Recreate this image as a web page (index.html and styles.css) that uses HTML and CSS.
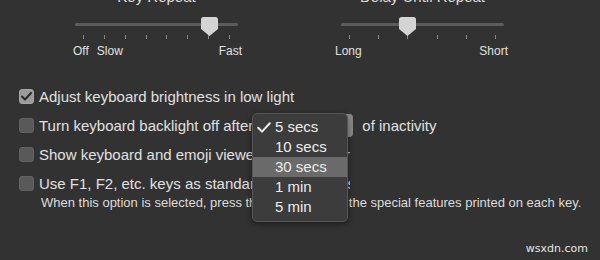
FILE: index.html
```html
<!DOCTYPE html>
<html>
<head>
<meta charset="utf-8">
<link rel="stylesheet" href="styles.css">
</head>
<body>
<div class="page">
  <div class="sliders">
    <div class="slider">
      <div class="slider-title">Key Repeat</div>
      <div class="rail">
        <div class="track"></div>
        <svg class="thumb thumb-kr" width="17" height="19" viewBox="0 0 17 19"><path d="M2.5 0 H14.5 Q17 0 17 2.5 V12 L8.5 19 L0 12 V2.5 Q0 0 2.5 0 Z" fill="#d4d4d4"/></svg>
      </div>
      <div class="ticks"><i></i><i></i><i></i><i></i><i></i><i></i><i></i><i></i></div>
      <div class="labels labels-kr">
        <span class="lbl-group"><span>Off</span><span>Slow</span></span>
        <span>Fast</span>
      </div>
    </div>
    <div class="slider">
      <div class="slider-title">Delay Until Repeat</div>
      <div class="rail">
        <div class="track"></div>
        <svg class="thumb thumb-dr" width="17" height="19" viewBox="0 0 17 19"><path d="M2.5 0 H14.5 Q17 0 17 2.5 V12 L8.5 19 L0 12 V2.5 Q0 0 2.5 0 Z" fill="#d4d4d4"/></svg>
      </div>
      <div class="ticks"><i></i><i></i><i></i><i></i><i></i><i></i></div>
      <div class="labels labels-dr">
        <span>Long</span>
        <span>Short</span>
      </div>
    </div>
  </div>

  <div class="options">
    <div class="row">
      <span class="box checked"><svg width="11" height="9" viewBox="0 0 11 9"><path d="M1 4.5 L4 7.5 L10 1" fill="none" stroke="#2a2a2a" stroke-width="2" stroke-linecap="round" stroke-linejoin="round"/></svg></span>
      <span class="text">Adjust keyboard brightness in low light</span>
    </div>
    <div class="row">
      <span class="box"></span>
      <span class="text">Turn keyboard backlight off after</span>
      <span class="popup-btn"><span class="popup-arrows"></span></span>
      <span class="text">of inactivity</span>
    </div>
    <div class="row">
      <span class="box"></span>
      <span class="text clip">Show keyboard and emoji viewers in menu bar</span>
    </div>
    <div class="row">
      <span class="box"></span>
      <span class="text clip">Use F1, F2, etc. keys as standard function keys</span>
    </div>
    <div class="desc">When this option is selected, press the Fn key to use the special features printed on each key.</div>
  </div>

  <div class="watermark">wsxdn.com</div>

  <div class="menu">
    <div class="item"><svg class="check" width="14" height="11" viewBox="0 0 14 11"><path d="M1.2 5.8 L5 9.6 L12.8 1.2" fill="none" stroke="#ececec" stroke-width="2" stroke-linecap="round" stroke-linejoin="round"/></svg>5 secs</div>
    <div class="item">10 secs</div>
    <div class="item selected">30 secs</div>
    <div class="item">1 min</div>
    <div class="item">5 min</div>
  </div>
</div>
</body>
</html>
```

FILE: styles.css
```css
html, body {
  margin: 0;
  padding: 0;
  background: #323232;
}
body {
  width: 600px;
  height: 260px;
  overflow: hidden;
  font-family: "Liberation Sans", Arial, sans-serif;
  color: #dedede;
}
.page {
  position: relative;
  width: 600px;
  height: 260px;
}
.sliders {
  display: flex;
  gap: 103px;
  padding-left: 75px;
}
.slider {
  width: 163px;
  display: flex;
  flex-direction: column;
}
.slider-title {
  margin-top: -11px;
  height: 16px;
  line-height: 16px;
  font-size: 15px;
  text-align: center;
  color: #dedede;
}
.rail {
  position: relative;
  margin-top: 12px;
  height: 17px;
}
.track {
  margin-top: 6px;
  height: 3px;
  border-radius: 2px;
  background: #5c5c5c;
}
.thumb {
  position: absolute;
  top: 0;
  display: block;
}
.thumb-kr { left: 126px; }
.thumb-dr { left: 58px; }
.ticks {
  display: flex;
  justify-content: space-between;
  padding: 0 8px;
  height: 5px;
}
.ticks i {
  display: block;
  width: 1px;
  height: 4px;
  margin-top: 1px;
  background: #8a8a8a;
}
.labels {
  display: flex;
  justify-content: space-between;
  margin-top: 5px;
  font-size: 12px;
  line-height: 14px;
  color: #e0e0e0;
}
.labels-kr { margin-left: -2px; margin-right: -4px; }
.labels-dr { margin-left: -6px; margin-right: -4px; }
.lbl-group {
  display: flex;
  gap: 8px;
}
.options {
  margin-top: 30px;
  padding-left: 19px;
  display: flex;
  flex-direction: column;
  gap: 12px;
}
.row {
  display: flex;
  align-items: center;
  height: 17px;
  white-space: nowrap;
  font-size: 15px;
  line-height: 17px;
  color: #e0e0e0;
}
.text.clip {
  max-width: 311px;
  overflow: hidden;
}
.box {
  width: 15px;
  height: 15px;
  box-sizing: border-box;
  border-radius: 3px;
  background: #595959;
  border: 1px solid #626262;
  margin-right: 5px;
  flex: none;
  display: flex;
  align-items: center;
  justify-content: center;
}
.box.checked {
  background: #9b9b9b;
  border-color: #a6a6a6;
}
.box svg { display: block; }
.popup-btn {
  display: inline-block;
  width: 96px;
  height: 23px;
  margin: 0 9px 0 4px;
  border-radius: 4px;
  background: #5a5a5a;
  position: relative;
  flex: none;
}
.popup-arrows {
  position: absolute;
  right: 0;
  top: 0;
  width: 16px;
  height: 23px;
  border-radius: 0 4px 4px 0;
  background: linear-gradient(to right, #a8a8a8, #868686);
}
.desc {
  margin-top: -9px;
  padding-left: 22px;
  font-size: 13px;
  line-height: 16px;
  white-space: nowrap;
  color: #dcdcdc;
}
.watermark {
  position: absolute;
  right: 12px;
  top: 242px;
  font-family: "DejaVu Sans", sans-serif;
  font-size: 11px;
  line-height: 14px;
  color: #e6e6e6;
}
.menu {
  position: absolute;
  left: 252px;
  top: 113px;
  width: 96px;
  box-sizing: border-box;
  padding: 3px 0 4px;
  background: #3c3c3c;
  border: 1px solid #555;
  border-radius: 5px;
  box-shadow: 0 2px 6px rgba(0,0,0,0.45);
}
.item {
  position: relative;
  height: 20px;
  line-height: 20px;
  padding-left: 22px;
  font-size: 15px;
  color: #ececec;
}
.item.selected {
  background: #6a6a6a;
}
.check {
  position: absolute;
  left: 4px;
  top: 5px;
}
```
